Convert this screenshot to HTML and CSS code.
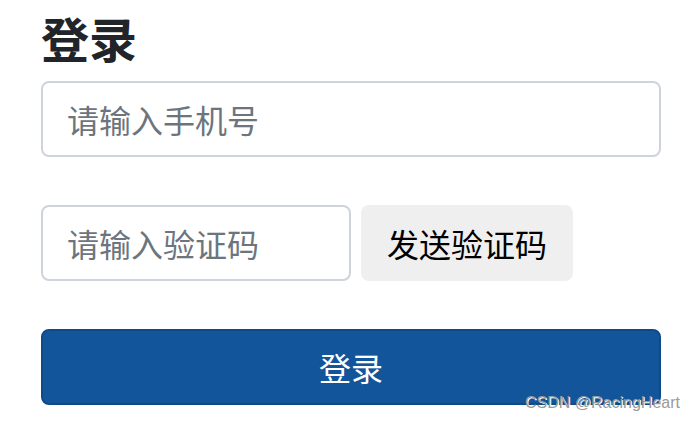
FILE: index.html
```html
<!DOCTYPE html>
<html lang="zh">
<head>
<meta charset="utf-8">
<title>登录</title>
<link rel="stylesheet" href="styles.css">
</head>
<body>
<main class="login">
  <h1 class="title">登录</h1>
  <input class="field field-phone" type="text" placeholder="请输入手机号">
  <div class="code-row">
    <input class="field field-code" type="text" placeholder="请输入验证码">
    <button class="btn-send" type="button">发送验证码</button>
  </div>
  <button class="btn-login" type="button">登录</button>
</main>
<div class="watermark">CSDN @RacingHeart</div>
</body>
</html>
```
FILE: styles.css
```css
html, body {
  margin: 0;
  padding: 0;
  background: #ffffff;
}
body {
  font-family: "Noto Sans CJK SC", "Noto Sans", sans-serif;
  position: relative;
  width: 694px;
  height: 424px;
  overflow: hidden;
}
.login {
  display: flex;
  flex-direction: column;
  align-items: flex-start;
  padding: 5px 0 0 41px;
  width: 620px;
}
.title {
  margin: 0 0 11px 0;
  font-size: 48px;
  line-height: 65px;
  font-weight: 700;
  color: #212529;
}
.field {
  box-sizing: border-box;
  height: 76px;
  border: 2px solid #ced4da;
  border-radius: 8px;
  padding: 0 24px;
  font-family: inherit;
  font-size: 32px;
  color: #495057;
  background: #fff;
  outline: none;
}
.field::placeholder {
  color: #6c757d;
}
.field-phone {
  width: 620px;
}
.code-row {
  display: flex;
  gap: 10px;
  margin-top: 48px;
}
.field-code {
  width: 310px;
}
.btn-send {
  box-sizing: border-box;
  width: 212px;
  height: 76px;
  border: none;
  border-radius: 8px;
  background: #efefef;
  color: #000;
  font-family: inherit;
  font-size: 32px;
  padding: 0;
}
.btn-login {
  box-sizing: border-box;
  margin-top: 48px;
  width: 620px;
  height: 76px;
  border: 2px solid #0f4a88;
  border-radius: 8px;
  background: #13559b;
  color: #fff;
  font-family: inherit;
  font-size: 32px;
  padding: 0;
}
.watermark {
  position: absolute;
  left: 525px;
  top: 394px;
  font-family: "Liberation Sans", Arial, sans-serif;
  font-size: 16px;
  color: #9a9a9a;
  text-shadow: 1px 1px 0 #ffffff;
}
```
